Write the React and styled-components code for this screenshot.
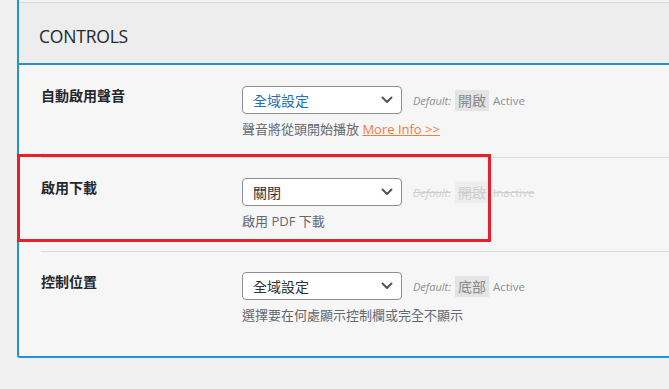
import React from "react";
import styled, { createGlobalStyle, css } from "styled-components";

const Global = createGlobalStyle`
  html, body { margin: 0; padding: 0; }
  body {
    background: #f0f0f0;
    font-family: "Open Sans", "Noto Sans CJK TC", sans-serif;
    color: #23282d;
    overflow: hidden;
  }
`;

const Page = styled.div`
  width: 669px;
  height: 389px;
  padding-left: 17px;
  box-sizing: border-box;
`;

const Panel = styled.section`
  background: #f6f6f6;
  border-left: 2px solid #1e96d1;
  border-bottom: 2px solid #1e96d1;
  border-bottom-left-radius: 3px;
  padding-bottom: 11px;
`;

const TopStrip = styled.div`
  height: 2px;
  background: #f3f3f3;
  border-bottom: 1px solid #dcdcdc;
`;

const Header = styled.h2`
  margin: 0;
  height: 62px;
  box-sizing: border-box;
  display: flex;
  align-items: center;
  padding: 6px 0 0 20px;
  background: #ededed;
  border-bottom: 2px solid #2d8fcb;
  font-size: 17.5px;
  font-weight: 400;
  color: #23282d;
  letter-spacing: -0.2px;
`;

const Rows = styled.div`
  padding: 1px 0 0 22px;
`;

const Row = styled.div`
  position: relative;
  display: grid;
  grid-template-columns: 201px 1fr;
  padding: 20px 0 ${(p) => (p.$first ? "19px" : "21px")};
  border-top: ${(p) => (p.$first ? "none" : "1px solid #dcdcdc")};
`;

const Label = styled.div`
  font-size: 14px;
  font-weight: 700;
  line-height: 20px;
  color: #23282d;
`;

const Field = styled.div`
  display: flex;
  flex-direction: column;
`;

const Line = styled.div`
  display: flex;
  align-items: center;
  gap: 11px;
`;

const Select = styled.div`
  width: 160px;
  height: 28px;
  box-sizing: border-box;
  border: 1px solid #8c8f94;
  border-radius: 4px;
  background: #fff;
  display: flex;
  align-items: center;
  justify-content: space-between;
  padding: 0 8px 0 10px;
  font-size: 14px;
  color: ${(p) => (p.$active ? "#2271b1" : "#2c3338")};
`;

const Chevron = () => (
  <svg width="12" height="8" viewBox="0 0 12 8" aria-hidden="true">
    <path d="M1.5 1.5 L6 6 L10.5 1.5" fill="none" stroke="#50575e" strokeWidth="2" strokeLinecap="round" strokeLinejoin="round" />
  </svg>
);

const Defaults = styled.div`
  display: flex;
  align-items: center;
  gap: 4px;
`;

const offStyle = css`
  ${(p) =>
    p.$off &&
    css`
      text-decoration: line-through;
      text-decoration-color: #cfcfcf;
    `}
`;

const DefaultTag = styled.span`
  font-size: 11px;
  font-style: italic;
  color: ${(p) => (p.$off ? "#cfcfcf" : "#8c8f94")};
  ${offStyle}
`;

const Badge = styled.span`
  font-size: 14px;
  line-height: 21px;
  padding: 0 3px;
  background: ${(p) => (p.$off ? "#ededed" : "#e4e4e4")};
  color: ${(p) => (p.$off ? "#cfcfcf" : "#8a8a8a")};
  ${offStyle}
`;

const State = styled.span`
  font-size: 11.5px;
  color: ${(p) => (p.$off ? "#cfcfcf" : "#8c8f94")};
  ${offStyle}
`;

const Desc = styled.p`
  margin: 6px 0 0;
  font-size: 13px;
  line-height: 18px;
  color: #646970;
`;

const MoreLink = styled.a`
  color: #f37b3f;
  text-decoration: underline;
`;

const Highlight = styled.div`
  position: absolute;
  left: -24px;
  top: -4px;
  width: 474px;
  height: 88px;
  box-sizing: border-box;
  border: 3px solid #e8202a;
  pointer-events: none;
`;

const rows = [
  {
    label: "自動啟用聲音",
    value: "全域設定",
    active: true,
    badge: "開啟",
    state: "Active",
    desc: (
      <>
        聲音將從頭開始播放 <MoreLink href="#">More Info &gt;&gt;</MoreLink>
      </>
    ),
  },
  {
    label: "啟用下載",
    value: "關閉",
    off: true,
    badge: "開啟",
    state: "Inactive",
    desc: "啟用 PDF 下載",
    highlight: true,
  },
  {
    label: "控制位置",
    value: "全域設定",
    badge: "底部",
    state: "Active",
    desc: "選擇要在何處顯示控制欄或完全不顯示",
  },
];

export default function App() {
  return (
    <>
      <Global />
      <Page>
        <Panel>
          <TopStrip />
          <Header>CONTROLS</Header>
          <Rows>
            {rows.map((r, i) => (
              <Row key={r.label} $first={i === 0}>
                <Label>{r.label}</Label>
                <Field>
                  <Line>
                    <Select $active={r.active}>
                      <span>{r.value}</span>
                      <Chevron />
                    </Select>
                    <Defaults>
                      <DefaultTag $off={r.off}>Default:</DefaultTag>
                      <Badge $off={r.off}>{r.badge}</Badge>
                      <State $off={r.off}>{r.state}</State>
                    </Defaults>
                  </Line>
                  <Desc>{r.desc}</Desc>
                </Field>
                {r.highlight && <Highlight />}
              </Row>
            ))}
          </Rows>
        </Panel>
      </Page>
    </>
  );
}
